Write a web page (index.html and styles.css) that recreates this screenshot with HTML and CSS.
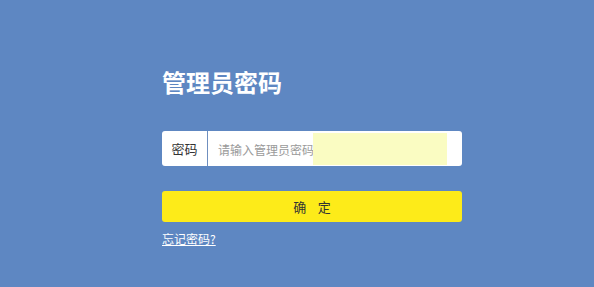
FILE: index.html
```html
<!DOCTYPE html>
<html lang="zh-CN">
<head>
<meta charset="utf-8">
<link rel="stylesheet" href="styles.css">
</head>
<body>
<div class="panel">
  <h1 class="title">管理员密码</h1>
  <div class="field">
    <span class="label">密码</span>
    <div class="input-wrap">
      <span class="placeholder">请输入管理员密码</span>
      <span class="autofill"></span>
    </div>
  </div>
  <button class="confirm">确&nbsp;&nbsp;&nbsp;&nbsp;定</button>
  <a class="forgot" href="#">忘记密码?</a>
</div>
</body>
</html>
```
FILE: styles.css
```css
html, body {
  margin: 0;
  padding: 0;
  background: #5e87c2;
  height: 100%;
}
body {
  font-family: "Noto Sans CJK SC", "Noto Sans", sans-serif;
}
.panel {
  width: 300px;
  margin-left: 162px;
  padding-top: 67px;
  display: flex;
  flex-direction: column;
}
.title {
  margin: 0;
  font-size: 24px;
  line-height: 30px;
  font-weight: bold;
  color: #ffffff;
}
.field {
  margin-top: 34px;
  height: 35px;
  background: #ffffff;
  border-radius: 3px;
  display: flex;
  align-items: stretch;
  overflow: hidden;
}
.label {
  width: 45px;
  border-right: 1px solid #6f8fbf;
  font-size: 13px;
  color: #333333;
  display: flex;
  align-items: center;
  justify-content: center;
}
.input-wrap {
  flex: 1;
  display: flex;
  align-items: center;
  padding: 2px 15px 1px 10px;
}
.placeholder {
  font-size: 12px;
  color: #9a9a9a;
  white-space: nowrap;
  width: 95px;
  align-self: center;
}
.autofill {
  width: 134px;
  align-self: stretch;
  background: #fafcc2;
}
.confirm {
  margin-top: 25px;
  height: 31px;
  border: none;
  border-radius: 3px;
  background: #fdeb19;
  color: #333333;
  font-family: inherit;
  font-size: 13px;
  padding: 0;
}
.forgot {
  margin-top: 9px;
  align-self: flex-start;
  font-size: 12px;
  line-height: 16px;
  color: #ffffff;
  text-decoration: underline;
}
```
